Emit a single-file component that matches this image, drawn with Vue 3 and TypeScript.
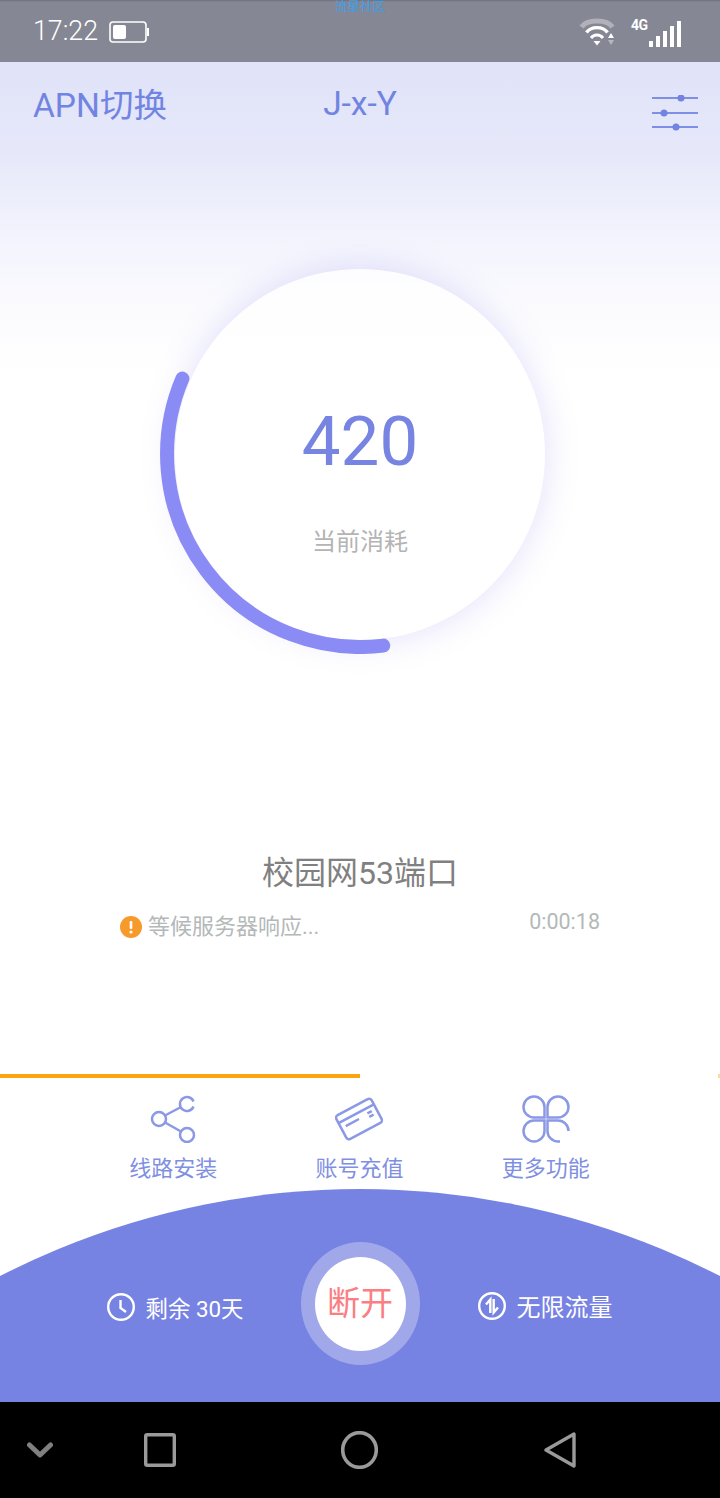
<template>
  <div class="phone">
    <div class="status-bar">
      <span class="watermark">流星社区</span>
      <div class="status-left">
        <span class="clock">17:22</span>
        <svg class="battery" width="40" height="22" viewBox="0 0 40 22">
          <rect x="1" y="1" width="36" height="20" rx="3" fill="none" stroke="#fff" stroke-width="1.6" />
          <rect x="4" y="4" width="13" height="14" rx="2" fill="#fff" />
          <rect x="38" y="7" width="2" height="8" fill="#fff" />
        </svg>
      </div>
      <div class="status-right">
        <svg class="wifi" width="37" height="29" viewBox="0 0 37 29">
          <path d="M2.5 10 C8 2 28 2 33.5 10" fill="none" stroke="#fff" stroke-opacity=".35" stroke-width="5" />
          <path d="M7.5 15.5 C12 9 24 9 28.5 15.5" fill="none" stroke="#fff" stroke-width="3.4" />
          <path d="M12 21 C15 17 21 17 24 21" fill="none" stroke="#fff" stroke-width="3" />
          <path d="M14.5 24 H21.5 L18 28.5 Z" fill="#fff" />
          <path d="M32 16 L35 21 H29 Z" fill="#fff" />
          <path d="M29 23 H35 L32 28 Z" fill="#fff" fill-opacity=".4" />
        </svg>
        <span class="net">4G</span>
        <svg class="signal" width="33" height="26" viewBox="0 0 33 26">
          <rect v-for="(bar, i) in signalBars" :key="i" :x="i * 7" :y="26 - bar" width="4" :height="bar" fill="#fff" />
        </svg>
      </div>
    </div>

    <div class="main">
      <div class="header">
        <span class="apn">APN切换</span>
        <span class="user">J-x-Y</span>
        <svg class="sliders" width="46" height="36" viewBox="0 0 46 36">
          <g stroke="#7f8fe6" stroke-width="2.2">
            <line x1="0" y1="3" x2="46" y2="3" />
            <line x1="0" y1="18" x2="46" y2="18" />
            <line x1="0" y1="32" x2="46" y2="32" />
          </g>
          <circle cx="29" cy="3" r="3.5" fill="#7284e2" />
          <circle cx="12" cy="18" r="3.5" fill="#7284e2" />
          <circle cx="24" cy="32" r="3.5" fill="#7284e2" />
        </svg>
      </div>

      <div class="gauge">
        <div class="dial">
          <span class="value">420</span>
          <span class="caption">当前消耗</span>
        </div>
        <svg class="arc" width="400" height="400" viewBox="0 0 400 400">
          <path
            d="M22.4 124.6 A193 193 0 0 0 223.2 391.6"
            fill="none"
            stroke="#8b8bf6"
            stroke-width="14"
            stroke-linecap="round"
          />
        </svg>
      </div>

      <div class="line-name">校园网53端口</div>
      <div class="line-state">
        <div class="state-msg">
          <svg width="22" height="22" viewBox="0 0 22 22">
            <circle cx="11" cy="11" r="11" fill="#f79a2c" />
            <rect x="9.7" y="5" width="2.6" height="8" rx="1.2" fill="#fff" />
            <circle cx="11" cy="16" r="1.6" fill="#fff" />
          </svg>
          <span>等候服务器响应...</span>
        </div>
        <span class="timer">0:00:18</span>
      </div>

      <div class="progress"><div class="progress-fill" :style="{ width: progress + '%' }"></div></div>

      <div class="menu">
        <div class="menu-item">
          <svg width="48" height="48" viewBox="0 0 48 48" class="menu-icon">
            <path d="M44.5 6.5 A7 7 0 1 0 44.5 11.5" />
            <circle cx="10" cy="24" r="7" />
            <circle cx="38" cy="40" r="7" />
            <path d="M16 20.5 L32 12 M16 27.5 L32 36.5" />
          </svg>
          <span>线路安装</span>
        </div>
        <div class="menu-item">
          <svg width="48" height="48" viewBox="0 0 48 48" class="menu-icon">
            <g transform="rotate(-28 24 24)">
              <rect x="4" y="10.5" width="40" height="27" rx="3" />
              <path d="M4 18 H44 M9 24 H24 M34 23 H39 M34 27 H39" />
            </g>
          </svg>
          <span>账号充值</span>
        </div>
        <div class="menu-item">
          <svg width="48" height="48" viewBox="0 0 48 48" class="menu-icon">
            <path d="M22.5 22.5 V12 A10.5 10.5 0 1 0 12 22.5 Z" />
            <path d="M25.5 22.5 V12 A10.5 10.5 0 1 1 36 22.5 Z" />
            <path d="M22.5 25.5 V36 A10.5 10.5 0 1 1 12 25.5 Z" />
            <path d="M46.5 36 A10.5 10.5 0 0 0 36 25.5 H25.5 V36 A10.5 10.5 0 0 0 36 46.5 H38" />
          </svg>
          <span>更多功能</span>
        </div>
      </div>
    </div>

    <div class="dock">
      <div class="dock-info left">
        <svg width="28" height="28" viewBox="0 0 28 28" class="dock-icon">
          <circle cx="14" cy="14" r="12.8" />
          <path d="M13.5 7 V15 L19 19" />
        </svg>
        <span>剩余 30天</span>
      </div>
      <div class="switch">
        <div class="switch-inner">断开</div>
      </div>
      <div class="dock-info right">
        <svg width="28" height="28" viewBox="0 0 28 28" class="dock-icon">
          <circle cx="14" cy="14" r="12.8" />
          <path d="M12.3 21 V7.5 L8 12.5 M15.7 7 V20.5 L20 15.5" />
        </svg>
        <span>无限流量</span>
      </div>
    </div>

    <div class="nav">
      <svg class="nav-hide" width="26" height="16" viewBox="0 0 26 16">
        <path d="M2.5 3 L13 13 L23.5 3" fill="none" stroke="#808080" stroke-width="5" stroke-linejoin="round" stroke-linecap="round" />
      </svg>
      <svg class="nav-recent" width="32" height="34" viewBox="0 0 32 34">
        <rect x="1.7" y="1.7" width="28.6" height="30.6" rx="1.5" fill="none" stroke="#9a9a9a" stroke-width="3.4" />
      </svg>
      <svg class="nav-home" width="37" height="38" viewBox="0 0 37 38">
        <ellipse cx="18.5" cy="19" rx="16.8" ry="17.3" fill="none" stroke="#9a9a9a" stroke-width="3.6" />
      </svg>
      <svg class="nav-back" width="32" height="36" viewBox="0 0 32 36">
        <path d="M30 2 V34 L2 18 Z" fill="none" stroke="#9a9a9a" stroke-width="3.4" stroke-linejoin="round" />
      </svg>
    </div>
  </div>
</template>

<script setup lang="ts">
const signalBars: number[] = [6, 11, 16, 21, 26]
const progress = 50
</script>

<style>
html,
body {
  margin: 0;
  background: #fff;
}
</style>

<style scoped>
.phone {
  width: 720px;
  height: 1498px;
  display: flex;
  flex-direction: column;
  overflow: hidden;
  font-family: Roboto, "Noto Sans CJK SC", sans-serif;
  background: #fff;
}

.status-bar {
  position: relative;
  height: 62px;
  flex: none;
  box-sizing: border-box;
  padding: 0 38px 0 33px;
  display: flex;
  justify-content: space-between;
  align-items: flex-start;
  background: linear-gradient(#6e6f7c 0, #868794 2px, #868794 100%);
  color: #fff;
}

.watermark {
  position: absolute;
  left: 335px;
  top: 0;
  font-size: 12.5px;
  line-height: 13px;
  color: #3aa0ea;
}

.status-left {
  display: flex;
  align-items: center;
  gap: 11px;
  height: 62px;
}

.clock {
  font-size: 26.8px;
  font-weight: 300;
}

.battery {
  margin-top: 1px;
}

.status-right {
  display: flex;
  align-items: flex-start;
  height: 62px;
}

.wifi {
  margin-top: 17px;
}

.net {
  margin: 17px 0 0 15px;
  font-size: 14px;
  line-height: 16px;
  font-weight: 700;
  width: 18px;
  letter-spacing: -0.5px;
}

.signal {
  margin-top: 21px;
}

.main {
  flex: 1;
  display: flex;
  flex-direction: column;
  background: linear-gradient(#e0e2f8 0, #e6e8fa 88px, #f4f5fd 188px, #fafafe 238px, #fff 310px);
}

.header {
  height: 84px;
  box-sizing: border-box;
  padding: 0 22px 0 34px;
  display: grid;
  grid-template-columns: 1fr auto 1fr;
  align-items: center;
  color: #7284e2;
  font-size: 33.5px;
}

.apn {
  margin: -3px 0 0 -1px;
}

.user {
  margin: -2px 12px 0 0;
}

.sliders {
  justify-self: end;
  margin-top: 18px;
}

.gauge {
  position: relative;
  width: 400px;
  height: 400px;
  margin: 108px auto 0;
  display: flex;
  align-items: center;
  justify-content: center;
}

.dial {
  width: 370px;
  height: 371px;
  border-radius: 50%;
  background: rgba(255, 255, 255, 0.75);
  box-shadow: 0 0 34px rgba(120, 110, 230, 0.22);
  display: flex;
  flex-direction: column;
  align-items: center;
}

.value {
  margin-top: 133px;
  font-size: 69px;
  line-height: 80px;
  color: #7784e2;
}

.caption {
  margin-top: 45px;
  font-size: 24px;
  line-height: 30px;
  color: #b4b4b4;
}

.arc {
  position: absolute;
  left: 0;
  top: 0;
}

.line-name {
  margin-top: 199px;
  text-align: center;
  font-size: 32px;
  line-height: 40px;
  color: #808080;
}

.line-state {
  margin-top: 14px;
  padding: 0 120px;
  display: flex;
  justify-content: space-between;
  align-items: flex-start;
  color: #b4b8b8;
}

.state-msg {
  display: flex;
  align-items: center;
  gap: 6px;
  margin-top: 3px;
  font-size: 22px;
  line-height: 34px;
}

.timer {
  font-size: 21.5px;
  line-height: 30px;
}

.progress {
  margin-top: 130px;
  height: 4px;
  background: linear-gradient(to left, #ffd9a0 2px, transparent 2px);
}

.progress-fill {
  height: 100%;
  background: #fca510;
}

.menu {
  padding: 17px 81px 0 80px;
  display: grid;
  grid-template-columns: repeat(3, 1fr);
}

.menu-item {
  display: flex;
  flex-direction: column;
  align-items: center;
  gap: 11px;
  font-size: 22px;
  line-height: 30px;
  color: #7f8fe2;
}

.menu-icon {
  fill: none;
  stroke: #8a98e6;
  stroke-width: 2.5;
}

.dock {
  height: 213px;
  flex: none;
  box-sizing: border-box;
  padding-top: 53px;
  display: grid;
  grid-template-columns: 1fr 119px 1fr;
  align-items: start;
  background: #7783e2;
  clip-path: ellipse(788px 788px at 360px 788px);
  color: #fff;
  font-size: 24px;
}

.dock-info {
  display: flex;
  align-items: center;
  gap: 11px;
  height: 123px;
}

.dock-info.left {
  justify-content: flex-end;
  padding-right: 57px;
  margin-top: 3px;
  font-size: 22.4px;
}

.dock-info.right {
  padding-left: 58px;
  margin-top: 2px;
}

.dock-icon {
  fill: none;
  stroke: #fff;
  stroke-width: 2.4;
}

.switch {
  width: 119px;
  height: 123px;
  border-radius: 50%;
  background: #a0a8e9;
  display: flex;
  align-items: center;
  justify-content: center;
}

.switch-inner {
  width: 91px;
  height: 94px;
  box-sizing: border-box;
  padding-bottom: 6px;
  border-radius: 50%;
  background: #fff;
  color: #fb7e83;
  font-size: 33px;
  display: flex;
  align-items: center;
  justify-content: center;
}

.nav {
  height: 96px;
  flex: none;
  background: #000;
  display: flex;
  align-items: center;
}

.nav-hide {
  margin-left: 27px;
}

.nav-recent {
  margin-left: 91px;
}

.nav-home {
  margin-left: 165px;
}

.nav-back {
  margin-left: 166px;
}
</style>
